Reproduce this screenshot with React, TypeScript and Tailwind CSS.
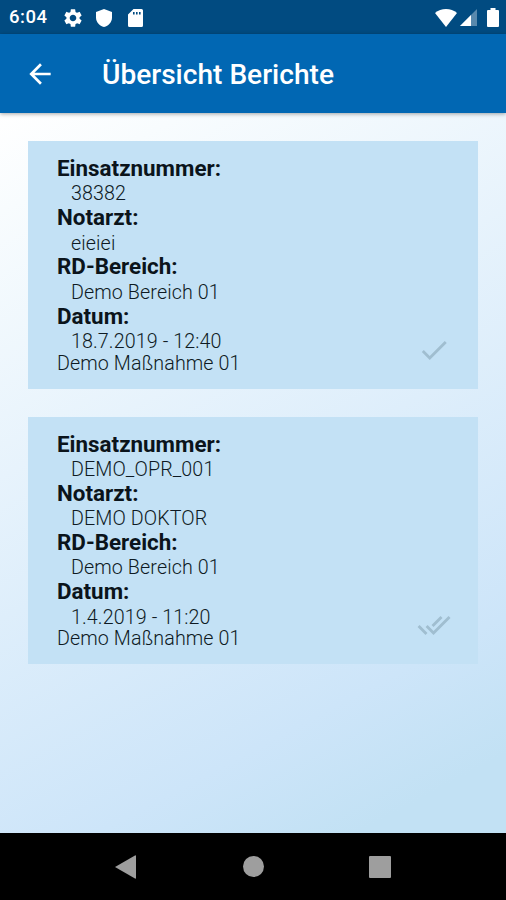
import { MdArrowBack, MdDone, MdDoneAll, MdSettings } from "react-icons/md";

type Report = {
  einsatznummer: string;
  notarzt: string;
  bereich: string;
  datum: string;
  massnahme: string;
  confirmed: boolean;
};

const reports: Report[] = [
  {
    einsatznummer: "38382",
    notarzt: "eieiei",
    bereich: "Demo Bereich 01",
    datum: "18.7.2019 - 12:40",
    massnahme: "Demo Maßnahme 01",
    confirmed: false
  },
  {
    einsatznummer: "DEMO_OPR_001",
    notarzt: "DEMO DOKTOR",
    bereich: "Demo Bereich 01",
    datum: "1.4.2019 - 11:20",
    massnahme: "Demo Maßnahme 01",
    confirmed: true
  }
];

function StatusBar() {
  return (
    <div className="flex h-[34px] shrink-0 items-center bg-[#014b81] pl-[9px] pr-[7px] pt-px text-white">
      <span className="w-[53px] text-[18.5px] font-medium leading-none tracking-[0.5px]">
        6:04
      </span>
      <MdSettings className="size-[22px]" />
      <svg className="ml-[12px] h-[18px] w-[16px]" viewBox="0 0 16 18" fill="currentColor">
        <path d="M8 0 0 3v5.500C0 13 3.400 16.800 8 18c4.600-1.200 8-5 8-9.500V3z" />
      </svg>
      <svg className="ml-[16px] h-[18px] w-[15px]" viewBox="0 0 15 18" fill="currentColor">
        <path
          fillRule="evenodd"
          d="M5.500 0H13.500Q15 0 15 1.500V16.500Q15 18 13.500 18H1.500Q0 18 0 16.500V5.500zM5 3v2.500h1.600V3zM8 3v2.500h1.600V3zM11 3v2.500h1.600V3z"
        />
      </svg>
      <div className="flex-1" />
      <svg className="h-[18px] w-[22px]" viewBox="0 0 22 18" fill="currentColor">
        <path d="M11 18 0 4C3 1.300 7 0 11 0s8 1.300 11 4z" />
      </svg>
      <svg className="ml-[3px] h-[17px] w-[17px]" viewBox="0 0 17 17" fill="currentColor">
        <path d="M0 17 17 0v17z" opacity="0.35" />
        <path d="M0 17 11 6v11z" />
      </svg>
      <svg className="ml-[10px] h-[19px] w-[12px]" viewBox="0 0 12 19" fill="currentColor">
        <path d="M3.500 0h5v2H11q1 0 1 1v15q0 1-1 1H1q-1 0-1-1V3q0-1 1-1h2.500z" />
      </svg>
    </div>
  );
}

function Field({ label, value }: { label: string; value: string }) {
  return (
    <div>
      <dt className="text-[22.4px] font-bold leading-[26.4px] tracking-normal text-[#0b141b]">
        {label}:
      </dt>
      <dd className="pl-[14px] pt-[4px] leading-[18.8px]">{value}</dd>
    </div>
  );
}

function ReportCard({ report }: { report: Report }) {
  return (
    <article className="flex h-[247.500px] items-start justify-between bg-[#c3e1f5] pl-[29px] pr-[27px] pt-[14px]">
      <div className="text-[19.7px] font-light leading-[22.8px] tracking-[0.1px] text-[#0e1a23]">
        <dl>
          <Field label="Einsatznummer" value={report.einsatznummer} />
          <Field label="Notarzt" value={report.notarzt} />
          <Field label="RD-Bereich" value={report.bereich} />
          <Field label="Datum" value={report.datum} />
        </dl>
        <p className="pt-px">{report.massnahme}</p>
      </div>
      <div className="mb-[22px] flex w-[34px] justify-center self-end text-[#a0bed0]">
        {report.confirmed ? (
          <MdDoneAll className="size-[34px]" />
        ) : (
          <MdDone className="size-[34px]" />
        )}
      </div>
    </article>
  );
}

function NavigationBar() {
  return (
    <nav className="flex h-[67px] shrink-0 items-center justify-between bg-black px-[115px]">
      <svg className="h-[24px] w-[21px]" viewBox="0 0 21 24" fill="#9e9e9e">
        <path d="M0 12 20 .5q1-.5 1 .5v22q0 1-1 .5z" />
      </svg>
      <div className="ml-[2px] size-[21px] rounded-full bg-[#9e9e9e]" />
      <div className="size-[22px] rounded-[1px] bg-[#9e9e9e]" />
    </nav>
  );
}

export default function App() {
  return (
    <div className="flex h-[900px] w-[506px] flex-col overflow-hidden font-['Roboto',sans-serif]">
      <StatusBar />
      <header className="z-10 flex h-[79px] shrink-0 items-center bg-[#0167b3] pl-[24px] text-white shadow-[0_1px_4px_rgba(0,0,0,0.35)]">
        <MdArrowBack className="size-[32px]" />
        <h1 className="ml-[46px] pt-[4px] text-[28.1px] font-medium leading-none">
          Übersicht Berichte
        </h1>
      </header>
      <main className="flex flex-1 flex-col gap-[28px] bg-[linear-gradient(152deg,#ffffff_0%,#f8fcfe_10%,#cde5f9_78%,#c2e1f4_92%)] px-[28px] pt-[28px]">
        {reports.map((report) => (
          <ReportCard key={report.einsatznummer} report={report} />
        ))}
      </main>
      <NavigationBar />
    </div>
  );
}
